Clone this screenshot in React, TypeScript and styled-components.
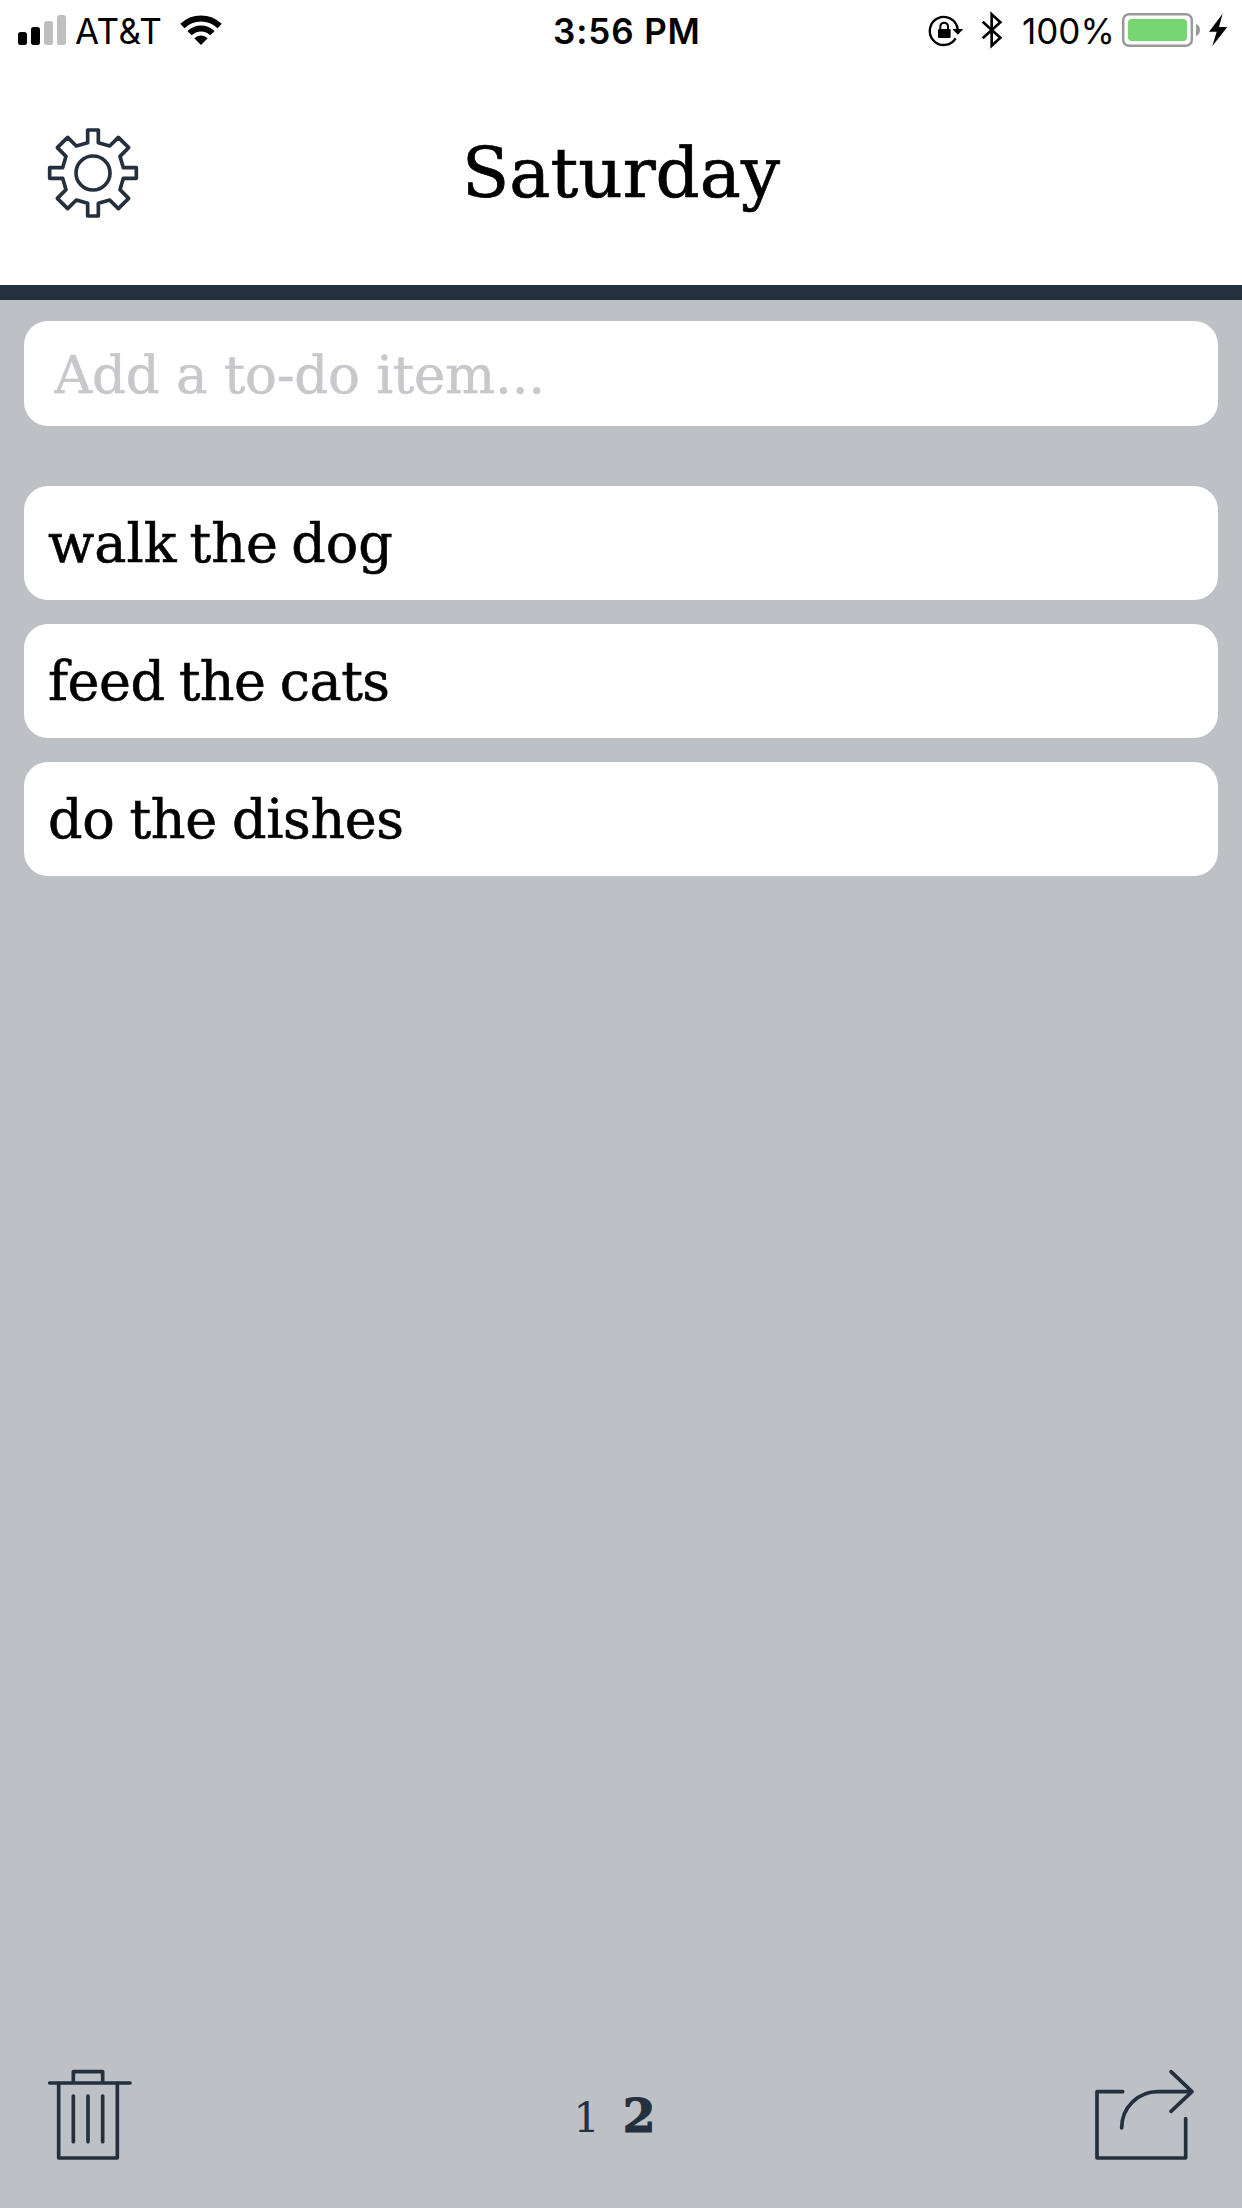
import React from "react";
import styled, { createGlobalStyle } from "styled-components";

const ink = "#24303d";
const slab = `"American Typewriter", "DejaVu Serif", serif`;
const sans = `Inter, "Liberation Sans", sans-serif`;

const GlobalStyle = createGlobalStyle`
  * { box-sizing: border-box; }
  body { margin: 0; background: #bdc1c6; }
`;

const Screen = styled.div`
  display: flex;
  flex-direction: column;
  width: 1242px;
  height: 2208px;
  overflow: hidden;
  background: #bdc1c6;
  color: #000;
  font-family: ${slab};
`;

const StatusBar = styled.div`
  display: grid;
  grid-template-columns: 1fr auto 1fr;
  align-items: center;
  height: 60px;
  padding: 0 15px 0 18px;
  background: #fff;
  font-family: ${sans};
`;

const StatusGroup = styled.div<{ $end?: boolean }>`
  display: flex;
  align-items: center;
  justify-content: ${(p) => (p.$end ? "flex-end" : "flex-start")};
`;

const StatusText = styled.span<{ $width: number; $bold?: boolean; $track?: number; $left?: number }>`
  width: ${(p) => p.$width}px;
  margin-left: ${(p) => p.$left ?? 0}px;
  padding-top: 2px;
  font-size: 35px;
  line-height: 40px;
  font-weight: ${(p) => (p.$bold ? 600 : 400)};
  letter-spacing: ${(p) => p.$track ?? 0}px;
  white-space: nowrap;
`;

const Glyph = styled.svg<{ $left?: number }>`
  display: block;
  flex: none;
  margin-left: ${(p) => p.$left ?? 0}px;
  overflow: visible;
`;

const Header = styled.header`
  display: grid;
  grid-template-columns: 90px 1fr 90px;
  align-items: center;
  height: 240px;
  padding: 1px 48px 0;
  background: #fff;
  border-bottom: 15px solid ${ink};
`;

const Title = styled.h1`
  margin: 0;
  font-size: 69px;
  font-weight: 400;
  line-height: 84px;
  letter-spacing: 0;
  -webkit-text-stroke: 0.7px currentColor;
  text-align: center;
  white-space: nowrap;
`;

const Main = styled.main`
  flex: 1;
  padding: 21px 24px 0;
`;

const NewItem = styled.input`
  display: block;
  width: 100%;
  height: 105px;
  padding: 1px 30px 0;
  border: 0;
  outline: 0;
  border-radius: 24px;
  background: #fff;
  font: 400 53px ${slab};
  letter-spacing: -0.25px;
  -webkit-text-stroke: 0.5px currentColor;
  &::placeholder { color: #c7c7cc; opacity: 1; }
`;

const List = styled.ul`
  display: flex;
  flex-direction: column;
  gap: 24px;
  margin: 60px 0 0;
  padding: 0;
  list-style: none;
`;

const Item = styled.li<{ $track: number; $word: number }>`
  display: flex;
  align-items: center;
  height: 114px;
  padding: 2px 24px 0;
  border-radius: 24px;
  background: #fff;
  font-size: 54px;
  line-height: 64px;
  letter-spacing: ${(p) => p.$track}px;
  word-spacing: ${(p) => p.$word}px;
  -webkit-text-stroke: 0.6px currentColor;
  white-space: nowrap;
`;

const Footer = styled.footer`
  display: grid;
  grid-template-columns: 1fr auto 1fr;
  align-items: center;
  height: 140px;
  padding: 0 47px 46px 48px;
  color: ${ink};
`;

const IconButton = styled.button<{ $end?: boolean }>`
  justify-self: ${(p) => (p.$end ? "end" : "start")};
  padding: 0;
  border: 0;
  background: none;
  color: ${ink};
`;

const Pages = styled.nav`
  display: flex;
  align-items: baseline;
  gap: 23px;
  margin-right: 14px;
  padding-top: 4px;
`;

const Page = styled.span<{ $active?: boolean }>`
  font-size: ${(p) => (p.$active ? 47 : 41)}px;
  line-height: 50px;
  font-weight: ${(p) => (p.$active ? 700 : 400)};
  -webkit-text-stroke: ${(p) => (p.$active ? 1.2 : 0)}px currentColor;
`;

const line = {
  fill: "none",
  stroke: "currentColor",
  strokeWidth: 11,
  strokeLinecap: "round",
  strokeLinejoin: "round",
} as const;

const Signal = () => (
  <Glyph width="48" height="30" viewBox="0 0 48 30">
    <rect x="0" y="17" width="9" height="13" rx="2.8" />
    <rect x="13" y="12" width="9" height="18" rx="2.8" />
    <rect x="26" y="6" width="9" height="24" rx="2.8" fill="#bfbfbf" />
    <rect x="39" y="0" width="9" height="30" rx="2.8" fill="#bfbfbf" />
  </Glyph>
);

const Wifi = () => (
  <Glyph width="42" height="30" viewBox="540 45 126 90">
    <g fill="none" stroke="#000" strokeWidth="18">
      <path d="M547 78A80 80 0 0 1 659 78" />
      <path d="M568.5 99.5A49 49 0 0 1 637.5 99.5" />
    </g>
    <path d="M603 135L583 115A28 28 0 0 1 623 115Z" />
  </Glyph>
);

const RotationLock = () => (
  <Glyph width="34" height="30" viewBox="86 45 102 90">
    <path d="M166 115A42 42 0 1 1 172 88" fill="none" stroke="#000" strokeWidth="7" />
    <path d="M156 87H189L172.500 104Z" />
    <rect x="113" y="87" width="38" height="27" rx="4" />
    <path d="M120 90V77A12 12 0 0 1 143 77V90" fill="none" stroke="#000" strokeWidth="6" />
  </Glyph>
);

const Bluetooth = () => (
  <Glyph width="20" height="36" viewBox="245 37 60 108" $left={19}>
    <path d="M247 66L300 114L274 138V44L300 68L247 116" fill="none" stroke="#000" strokeWidth="8" />
  </Glyph>
);

const Battery = () => (
  <Glyph width="78" height="34" viewBox="666 39 234 102">
    <rect x="669.500" y="42.500" width="206" height="95" rx="18" fill="none" stroke="#999" strokeWidth="7.500" />
    <rect x="684" y="57" width="177" height="66" rx="11" fill="#76d672" />
    <path d="M888 71Q900 77 900 90T888 109Z" fill="#999" />
  </Glyph>
);

const Bolt = () => (
  <Glyph width="18" height="32" viewBox="927 43 54 96" $left={9}>
    <path d="M968 42L927 96H950L937 139L982 82H957Z" />
  </Glyph>
);

const Gear = () => (
  <Glyph width="90" height="90" viewBox="-135 -135 270 270">
    <path
      {...line}
      d="M-16-129H16V-91L50-81L76-107L107-76L81-50L91-16H130V16H91L81 50L107 76L76 107L50 81L16 91V129H-16V91L-50 81L-76 107L-107 76L-81 50L-91 16H-130V-16H-91L-81-50L-107-76L-76-107L-50-81L-16-91Z"
    />
    <circle {...line} r="51" />
  </Glyph>
);

const Trash = () => (
  <Glyph width="84" height="94" viewBox="54 54 252 282">
    <path {...line} d="M59 99H300M130 99V65H218V99M86 99V324H262V99M130 138V275M174 138V275M218 138V275" />
  </Glyph>
);

const Share = () => (
  <Glyph width="102" height="94" viewBox="69 54 306 282">
    <path {...line} d="M158 125H81V324H347V206M155 234C155 172 204 125 264 125H366M303 65L366 125L303 184" />
  </Glyph>
);

const todos = [
  { text: "walk the dog", track: 0, word: -4 },
  { text: "feed the cats", track: -0.5, word: -2.5 },
  { text: "do the dishes", track: -0.4, word: -1.5 },
];

export default function App() {
  return (
    <>
      <GlobalStyle />
      <Screen>
        <StatusBar>
          <StatusGroup>
            <Signal />
            <StatusText $width={105} $left={9} $track={0.4}>AT&amp;T</StatusText>
            <Wifi />
          </StatusGroup>
          <StatusText $width={146} $left={7} $bold $track={0.9}>3:56 PM</StatusText>
          <StatusGroup $end>
            <RotationLock />
            <Bluetooth />
            <StatusText $width={100} $left={20}>100%</StatusText>
            <Battery />
            <Bolt />
          </StatusGroup>
        </StatusBar>
        <Header>
          <IconButton aria-label="Settings"><Gear /></IconButton>
          <Title>Saturday</Title>
        </Header>
        <Main>
          <NewItem placeholder="Add a to-do item..." />
          <List>
            {todos.map((t) => (
              <Item key={t.text} $track={t.track} $word={t.word}>{t.text}</Item>
            ))}
          </List>
        </Main>
        <Footer>
          <IconButton aria-label="Delete"><Trash /></IconButton>
          <Pages>
            <Page>1</Page>
            <Page $active>2</Page>
          </Pages>
          <IconButton $end aria-label="Share"><Share /></IconButton>
        </Footer>
      </Screen>
    </>
  );
}
